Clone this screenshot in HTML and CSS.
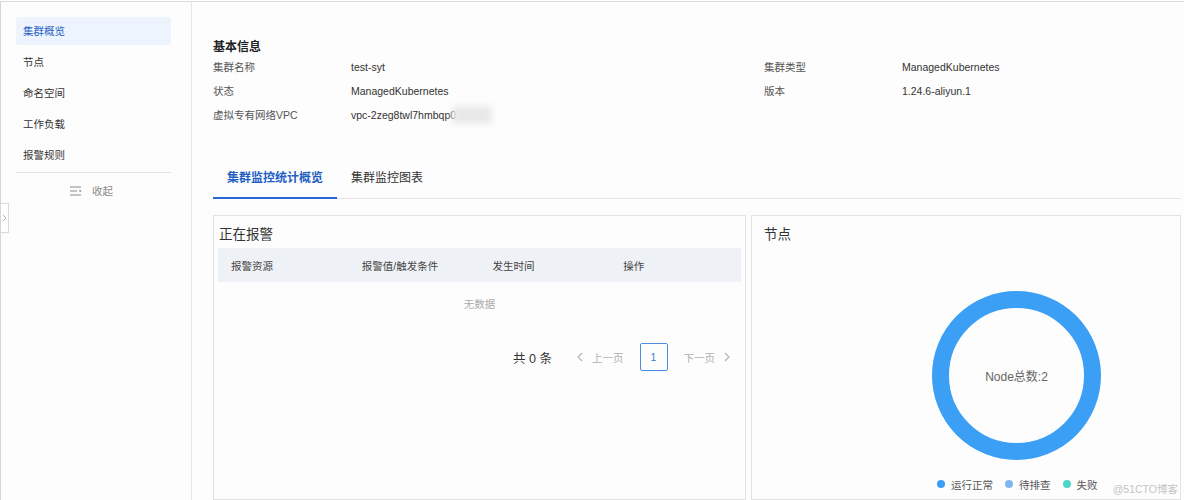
FILE: index.html
```html
<!DOCTYPE html>
<html lang="zh-CN">
<head>
<meta charset="utf-8">
<title>集群概览</title>
<link rel="stylesheet" href="styles.css">
</head>
<body>
<div class="app">
  <aside class="sidebar">
    <ul class="menu">
      <li class="menu-item active">集群概览</li>
      <li class="menu-item">节点</li>
      <li class="menu-item">命名空间</li>
      <li class="menu-item">工作负载</li>
      <li class="menu-item">报警规则</li>
    </ul>
    <div class="collapse">
      <svg class="collapse-icon" width="12" height="10" viewBox="0 0 12 10"><path d="M0 1h11M0 5h7M0 9h11" stroke="#8a8a8a" stroke-width="1.2" fill="none"/><path d="M9.5 3.6l2 1.4-2 1.4z" fill="#8a8a8a"/></svg>
      <span>收起</span>
    </div>
    <div class="handle"><svg width="5" height="8" viewBox="0 0 5 8"><path d="M1 1l3 3-3 3" stroke="#b0b0b0" stroke-width="1" fill="none"/></svg></div>
  </aside>
  <main class="main">
    <h2 class="section-title">基本信息</h2>
    <div class="info">
      <div class="label">集群名称</div><div class="value">test-syt</div>
      <div class="label">集群类型</div><div class="value">ManagedKubernetes</div>
      <div class="label">状态</div><div class="value">ManagedKubernetes</div>
      <div class="label">版本</div><div class="value">1.24.6-aliyun.1</div>
      <div class="label">虚拟专有网络VPC</div><div class="value"><span class="masked">vpc-2zeg8twl7hmbqp0<span class="blur"></span></span></div>
    </div>
    <div class="tabs">
      <div class="tab active">集群监控统计概览</div>
      <div class="tab">集群监控图表</div>
    </div>
    <div class="panels">
      <section class="panel">
        <h3 class="panel-title">正在报警</h3>
        <div class="table">
          <div class="thead">
            <div class="th">报警资源</div>
            <div class="th">报警值/触发条件</div>
            <div class="th">发生时间</div>
            <div class="th">操作</div>
          </div>
          <div class="empty">无数据</div>
        </div>
        <div class="pager">
          <span class="total">共 0 条</span>
          <span class="nav prev"><svg width="6" height="10" viewBox="0 0 6 10"><path d="M5 1L1 5l4 4" stroke="#b5b5b5" stroke-width="1.2" fill="none"/></svg>上一页</span>
          <span class="page">1</span>
          <span class="nav next">下一页<svg width="6" height="10" viewBox="0 0 6 10"><path d="M1 1l4 4-4 4" stroke="#b5b5b5" stroke-width="1.2" fill="none"/></svg></span>
        </div>
      </section>
      <section class="panel">
        <h3 class="panel-title node-title">节点</h3>
        <div class="chart">
          <div class="donut">
            <svg width="169" height="169" viewBox="0 0 169 169"><circle cx="84.5" cy="84.5" r="76" fill="none" stroke="#3b9ff5" stroke-width="17"/></svg>
            <span class="donut-label">Node总数:2</span>
          </div>
        </div>
        <div class="legend">
          <span class="legend-item"><i class="dot dot-ok"></i>运行正常</span>
          <span class="legend-item"><i class="dot dot-check"></i>待排查</span>
          <span class="legend-item"><i class="dot dot-fail"></i>失败</span>
        </div>
      </section>
    </div>
  </main>
  <div class="watermark">@51CTO博客</div>
</div>
</body>
</html>
```
FILE: styles.css
```css
* { box-sizing: border-box; }
html, body { margin: 0; padding: 0; }
body {
  background: #fdfdfd;
  font-family: "Liberation Sans", "Noto Sans CJK SC", sans-serif;
  color: #333;
  font-size: 10.5px;
  padding-top: 1px;
}
.app {
  position: relative;
  display: flex;
  height: 499px;
  border-top: 1px solid #dcdcdc;
  border-left: 1px solid #d6d6d6;
  overflow: hidden;
}
.sidebar {
  position: relative;
  width: 191px;
  flex: none;
  border-right: 1px solid #e6e6e6;
  padding: 15px 20px 0 15px;
}
.menu { list-style: none; margin: 0; padding: 0; }
.menu-item {
  height: 28px;
  line-height: 28px;
  margin-bottom: 3px;
  padding-left: 7px;
  color: #333;
  border-radius: 2px;
}
.menu-item.active { background: #edf4fe; color: #2a63c4; }
.collapse {
  border-top: 1px solid #e4e4e4;
  height: 36px;
  display: flex;
  align-items: center;
  justify-content: center;
  gap: 10px;
  color: #888;
  padding-right: 4px;
}
.handle {
  position: absolute;
  left: -1px;
  top: 201px;
  width: 9px;
  height: 30px;
  border: 1px solid #dadada;
  border-left: none;
  background: #fff;
  display: flex;
  align-items: center;
  justify-content: center;
}
.main {
  flex: 1;
  min-width: 0;
  padding: 37px 3px 0 21px;
  display: flex;
  flex-direction: column;
}
.section-title {
  margin: 0;
  font-size: 12px;
  line-height: 16px;
  font-weight: bold;
  color: #222;
}
.info {
  display: grid;
  grid-template-columns: 138px 413px 138px 1fr;
  line-height: 24px;
}
.label { color: #555; }
.value { color: #333; }
.masked { position: relative; }
.blur {
  position: absolute;
  left: 101px;
  top: -3px;
  width: 40px;
  height: 18px;
  background: #e9e9e9;
  filter: blur(3px);
}
.tabs {
  margin-top: 33px;
  display: flex;
  border-bottom: 1px solid #e6e6e6;
}
.tab {
  padding: 8px 14px 9px;
  line-height: 20px;
  font-size: 12px;
  color: #333;
  border-bottom: 2px solid transparent;
  margin-bottom: -1px;
}
.tab.active { color: #1f5fc4; font-weight: bold; border-bottom-color: #2468d4; }
.panels {
  margin-top: 16px;
  display: grid;
  grid-template-columns: 533px 1fr;
  gap: 5px;
  height: 285px;
}
.panel {
  border: 1px solid #e3e3e3;
  background: #fdfdfd;
  display: flex;
  flex-direction: column;
}
.panel-title {
  margin: 0;
  padding: 9px 5px 0;
  font-size: 13.5px;
  line-height: 20px;
  font-weight: normal;
  color: #333;
}
.node-title { padding-left: 12px; }
.table { margin: 3px 4px 0; }
.thead {
  display: grid;
  grid-template-columns: repeat(4, 1fr);
  height: 34px;
  align-items: center;
  background: #eef1f6;
}
.th { padding-left: 13px; color: #444; }
.empty {
  height: 44px;
  line-height: 44px;
  text-align: center;
  color: #aaa;
}
.pager {
  margin-top: 17px;
  display: flex;
  align-items: center;
  justify-content: flex-end;
  padding-right: 15px;
  height: 28px;
}
.total { font-size: 12.5px; color: #333; margin-right: 25px; }
.nav { display: flex; align-items: center; color: #b0b0b0; }
.prev svg { margin-right: 9px; }
.next svg { margin-left: 9px; }
.page {
  width: 28px;
  height: 28px;
  margin: 0 16px;
  border: 1px solid #4a8fe0;
  border-radius: 2px;
  color: #3a7bd5;
  display: flex;
  align-items: center;
  justify-content: center;
}
.chart {
  flex: 1;
  padding: 46px 0 0 180px;
}
.donut {
  position: relative;
  width: 169px;
  height: 169px;
}
.donut svg { display: block; }
.donut-label {
  position: absolute;
  inset: 0;
  display: flex;
  align-items: center;
  justify-content: center;
  font-size: 12px;
  color: #666;
}
.legend {
  display: flex;
  gap: 12px;
  padding-left: 185px;
  height: 24px;
  align-items: center;
  margin-bottom: 3px;
  color: #555;
}
.legend-item { display: flex; align-items: center; gap: 6px; }
.dot { width: 8px; height: 8px; border-radius: 50%; display: inline-block; }
.dot-ok { background: #3b9ff5; }
.dot-check { background: #7fb6f2; }
.dot-fail { background: #4dd6c4; }
.watermark {
  position: absolute;
  right: 6px;
  bottom: 4px;
  font-size: 10.5px;
  color: #c4c4c4;
}
```
